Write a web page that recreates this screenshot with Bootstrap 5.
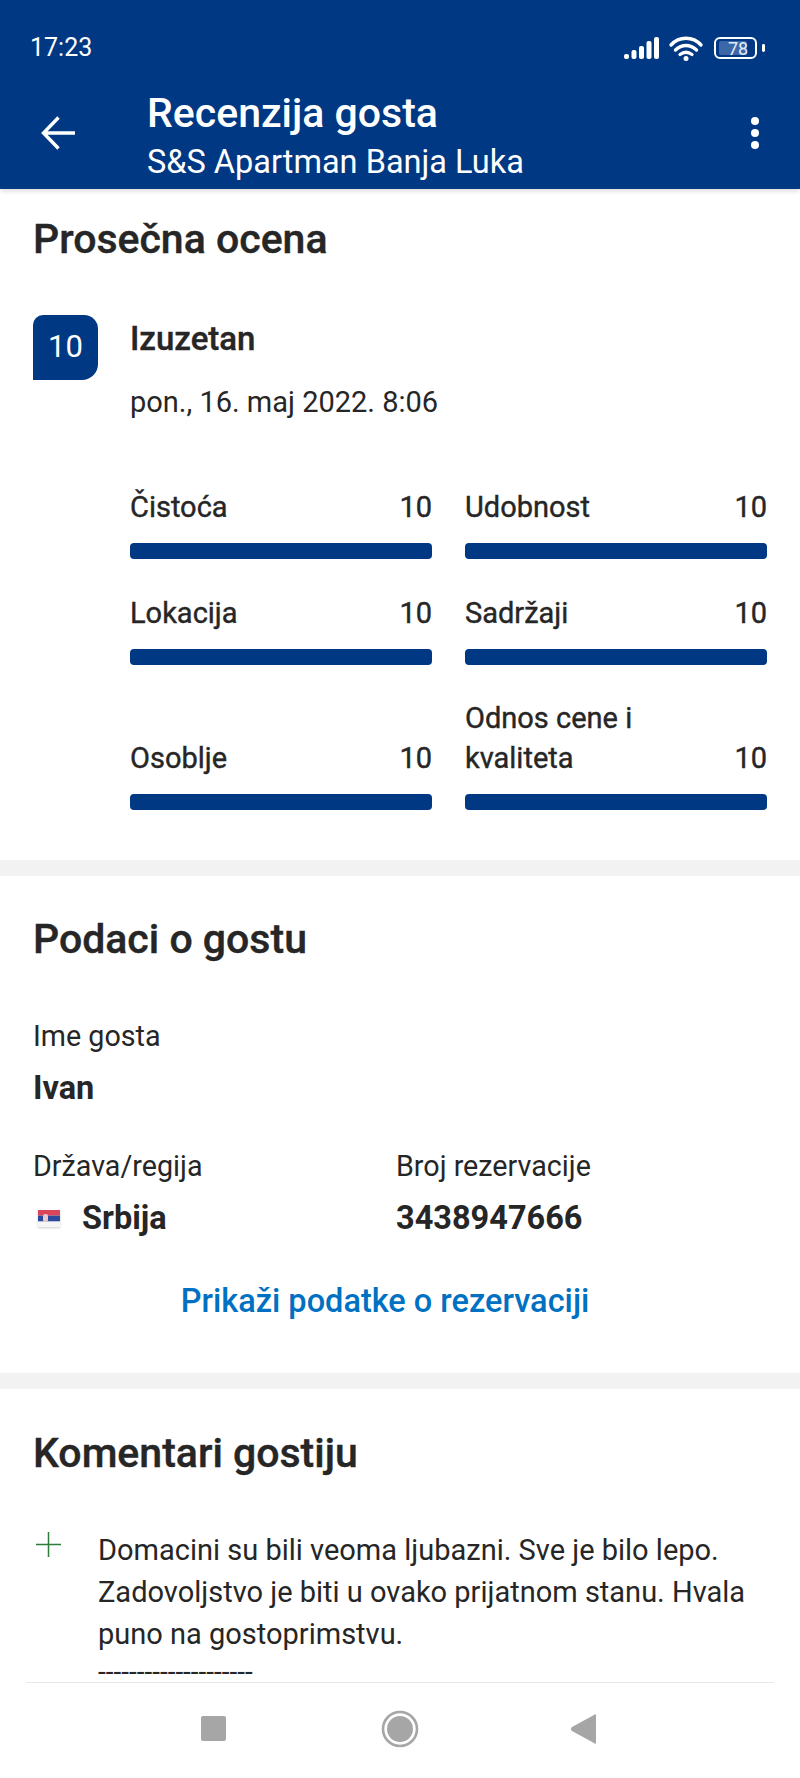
<!DOCTYPE html>
<html lang="sr">
<head>
<meta charset="UTF-8">
<meta name="viewport" content="width=device-width, initial-scale=1.0">
<title>Recenzija gosta</title>
<link rel="stylesheet" href="https://cdn.jsdelivr.net/npm/bootstrap@5.3.0/dist/css/bootstrap.min.css">
<style>
body { width: 800px; height: 1778px; overflow: hidden; font-family: Roboto, "Liberation Sans", sans-serif; color: #262626; background: #fff; display: flex; flex-direction: column; }
.app-top { background: #003883; color: #fff; height: 189px; flex: none; box-shadow: 0 2px 5px rgba(0,0,0,.15); position: relative; z-index: 2; }
.status-row { height: 76px; padding: 20px 35px 0 30px; font-size: 25px; }
.head-row { padding: 0 39px 0 40px; height: 113px; }
.head-titles { padding-left: 71px; margin-top: 6px; }
.head-title { font-size: 41px; font-weight: 500; line-height: 48px; }
.head-sub { font-size: 32.5px; line-height: 40px; margin-top: 5px; }
.scroll-area { flex: 1; min-height: 0; }
.block { padding: 0 33px; border-bottom: 16px solid #f2f2f2; }
.block-first { height: 687px; padding-top: 25px; }
.block-guest { height: 513px; padding-top: 38px; }
.block-last { border: 0; padding-top: 39px; }
.block-title { font-size: 41px; font-weight: 500; line-height: 50px; margin: 0; -webkit-text-stroke: .4px #262626; }
.score-box { width: 65px; height: 65px; background: #003883; color: #fff; font-size: 31px; border-radius: 10px 14px 16px 0; flex: none; }
.score-word { font-size: 33px; font-weight: 500; line-height: 36px; margin-top: 6px; -webkit-text-stroke: .4px #262626; }
.score-date { font-size: 29px; line-height: 36px; margin-top: 27px; }
.score-head { margin-top: 51px; gap: 32px; }
.rate-grid { display: grid; grid-template-columns: 302px 302px; column-gap: 33px; margin: 59px 0 0 97px; }
.rate-cell { display: flex; flex-direction: column; justify-content: flex-end; }
.rate-grid > .rate-cell:nth-child(-n+2) { height: 80px; }
.rate-grid > .rate-cell:nth-child(n+3):nth-child(-n+4) { height: 106px; }
.rate-grid > .rate-cell:nth-child(n+5) { height: 145px; }
.rate-label { font-size: 29px; line-height: 40px; -webkit-text-stroke: .4px #262626; }
.rate-bar { height: 16px; border-radius: 4px; background: #003883; margin-top: 16px; }
.field-label { font-size: 28.7px; line-height: 36px; }
.field-first { margin-top: 54px; }
.field-value { font-size: 32.5px; font-weight: 700; line-height: 40px; margin-top: 14px; }
.guest-col { width: 363px; flex: none; }
.flag { width: 22px; height: 17px; margin: 0 22px 0 5px; flex: none; box-shadow: 0 1px 2px rgba(0,0,0,.2); }
.res-row { margin-top: 43px; padding-right: 30px; text-align: center; }
.res-link { font-size: 32.5px; font-weight: 500; color: #0071c2; text-decoration: none; line-height: 40px; }
.comment-row { margin-top: 51px; }
.comment-text { font-size: 29px; line-height: 42px; color: #262626; }
.comment-dash { font-size: 28px; line-height: 22px; margin-top: 6px; }
.plus-icon { width: 26px; height: 26px; flex: none; margin: 3px 36px 0 3px; }
.nav-bottom { height: 96px; flex: none; background: #fff; position: relative; }
.nav-bottom::before { content: ""; position: absolute; left: 26px; right: 26px; top: 0; border-top: 1px solid #e8e8e8; }
</style>
</head>
<body>
<div class="app-top">
  <div class="status-row d-flex justify-content-between align-items-center">
    <span>17:23</span>
    <svg width="141" height="28" viewBox="0 0 141 28" fill="#fff">
      <rect x="0" y="20" width="5" height="5" rx="2"/>
      <rect x="7.500" y="16" width="5" height="9" rx="2"/>
      <rect x="15" y="12" width="5" height="13" rx="2"/>
      <rect x="22.500" y="7" width="5" height="18" rx="2"/>
      <rect x="30" y="3" width="5" height="22" rx="2"/>
      <path d="M47 11C55 2 69 2 77 11" fill="none" stroke="#fff" stroke-width="3.4" stroke-linecap="round"/>
      <path d="M51.500 16C58 10 66 10 72.500 16" fill="none" stroke="#fff" stroke-width="3.4" stroke-linecap="round"/>
      <path d="M56 20.500C60 17.500 64 17.500 68 20.500" fill="none" stroke="#fff" stroke-width="3.2" stroke-linecap="round"/>
      <circle cx="62" cy="24.500" r="2.500"/>
      <rect x="91" y="4" width="41" height="20" rx="5" fill="none" stroke="#fff" stroke-width="2"/>
      <rect x="95" y="7" width="28" height="14" rx="2" fill="#3b67a8"/>
      <rect x="138" y="10" width="3" height="8" rx="1.400"/>
      <text x="114" y="20.500" font-size="18" font-family="Roboto, sans-serif" text-anchor="middle" fill="#e3ebf6">78</text>
    </svg>
  </div>
  <div class="head-row d-flex align-items-center">
    <svg width="36" height="36" viewBox="0 0 36 36" fill="none" stroke="#fff" stroke-width="3.4">
      <path d="M35 18H4M18.500 2.500L3.500 18l15 15.500"/>
    </svg>
    <div class="head-titles flex-grow-1">
      <div class="head-title">Recenzija gosta</div>
      <div class="head-sub">S&amp;S Apartman Banja Luka</div>
    </div>
    <svg width="12" height="36" viewBox="0 0 12 36" fill="#fff">
      <circle cx="6" cy="6" r="4"/><circle cx="6" cy="18" r="4"/><circle cx="6" cy="30" r="4"/>
    </svg>
  </div>
</div>

<div class="scroll-area">
  <section class="block block-first">
    <h2 class="block-title">Prosečna ocena</h2>
    <div class="score-head d-flex">
      <div class="score-box d-flex align-items-center justify-content-center">10</div>
      <div>
        <div class="score-word">Izuzetan</div>
        <div class="score-date">pon., 16. maj 2022. 8:06</div>
      </div>
    </div>
    <div class="rate-grid">
      <div class="rate-cell"><div class="rate-label d-flex justify-content-between align-items-end"><span>Čistoća</span><span>10</span></div><div class="rate-bar"></div></div>
      <div class="rate-cell"><div class="rate-label d-flex justify-content-between align-items-end"><span>Udobnost</span><span>10</span></div><div class="rate-bar"></div></div>
      <div class="rate-cell"><div class="rate-label d-flex justify-content-between align-items-end"><span>Lokacija</span><span>10</span></div><div class="rate-bar"></div></div>
      <div class="rate-cell"><div class="rate-label d-flex justify-content-between align-items-end"><span>Sadržaji</span><span>10</span></div><div class="rate-bar"></div></div>
      <div class="rate-cell"><div class="rate-label d-flex justify-content-between align-items-end"><span>Osoblje</span><span>10</span></div><div class="rate-bar"></div></div>
      <div class="rate-cell"><div class="rate-label d-flex justify-content-between align-items-end"><span>Odnos cene i<br>kvaliteta</span><span>10</span></div><div class="rate-bar"></div></div>
    </div>
  </section>

  <section class="block block-guest">
    <h2 class="block-title">Podaci o gostu</h2>
    <div class="field-label field-first">Ime gosta</div>
    <div class="field-value">Ivan</div>
    <div class="d-flex mt-4 pt-3">
      <div class="guest-col">
        <div class="field-label">Država/regija</div>
        <div class="field-value d-flex align-items-center">
          <svg class="flag" viewBox="0 0 22 17">
            <rect width="22" height="17" fill="#f6f6f6"/>
            <rect width="22" height="5.700" fill="#d9465a"/>
            <rect y="5.700" width="22" height="5.600" fill="#2b4a9b"/>
            <rect x="5" y="4" width="5" height="8" rx="2" fill="#e9c9c9"/>
          </svg>
          <span>Srbija</span>
        </div>
      </div>
      <div>
        <div class="field-label">Broj rezervacije</div>
        <div class="field-value">3438947666</div>
      </div>
    </div>
    <div class="res-row"><a class="res-link" href="#">Prikaži podatke o rezervaciji</a></div>
  </section>

  <section class="block block-last">
    <h2 class="block-title">Komentari gostiju</h2>
    <div class="d-flex comment-row">
      <svg class="plus-icon" viewBox="0 0 26 26" stroke="#2e7d3a" stroke-width="1.5"><path d="M0 12.500H25M12.500 0V25"/></svg>
      <div class="comment-text">
        <div>Domacini su bili veoma ljubazni. Sve je bilo lepo. Zadovoljstvo je biti u ovako prijatnom stanu. Hvala puno na gostoprimstvu.</div>
        <div class="comment-dash">--------------------</div>
      </div>
    </div>
  </section>
</div>

<div class="nav-bottom">
  <svg width="800" height="96" viewBox="0 0 800 96" fill="#a6a6a6">
    <rect x="201" y="34" width="25" height="25" rx="2"/>
    <circle cx="400" cy="47" r="13"/>
    <circle cx="400" cy="47" r="17" fill="none" stroke="#a6a6a6" stroke-width="2.6"/>
    <path d="M596 35v25a1 1 0 0 1-2 1l-22-12a2.500 2.500 0 0 1 0-4l22-12a1 1 0 0 1 2 1z"/>
  </svg>
</div>
<script src="https://cdn.jsdelivr.net/npm/bootstrap@5.3.0/dist/js/bootstrap.bundle.min.js"></script>
</body>
</html>
